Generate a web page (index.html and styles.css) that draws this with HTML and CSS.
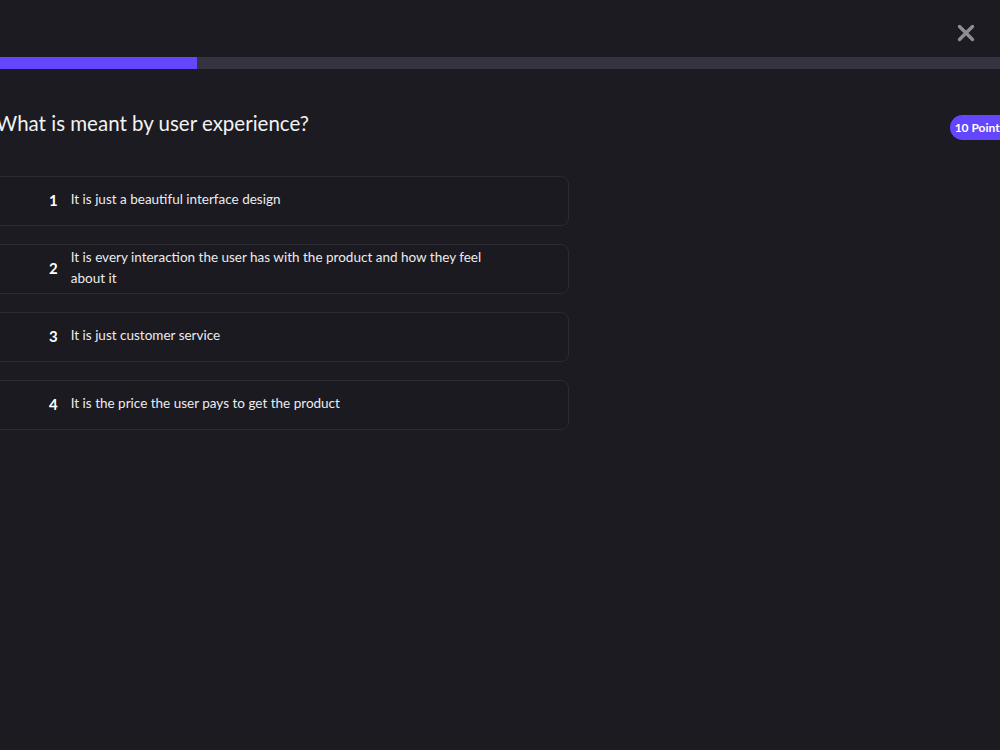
FILE: index.html
```html
<!DOCTYPE html>
<html lang="en">
<head>
    <meta charset="UTF-8">
    <meta name="viewport" content="width=device-width, initial-scale=1.0">
    <title>Quiz</title>
    <link rel="stylesheet" href="styles.css">
</head>
<body>
    <header class="quiz-header">
        <button class="close-btn" aria-label="Close">
            <svg width="18" height="18" viewBox="0 0 18 18">
                <path d="M2.5 2.5 L15.5 15.5 M15.5 2.5 L2.5 15.5" stroke="#8e8d93" stroke-width="3.4" stroke-linecap="round" fill="none"/>
            </svg>
        </button>
    </header>
    <div class="progress">
        <div class="progress-fill" style="width: 197px;"></div>
    </div>

    <main class="quiz">
        <div class="question-row">
            <h2 class="question">What is meant by user experience?</h2>
            <span class="points">10 Points</span>
        </div>

        <ul class="options">
            <li class="option">
                <span class="option-num">1</span>
                <span class="option-text">It is just a beautiful interface design</span>
            </li>
            <li class="option">
                <span class="option-num">2</span>
                <span class="option-text">It is every interaction the user has with the product and how they feel about it</span>
            </li>
            <li class="option">
                <span class="option-num">3</span>
                <span class="option-text">It is just customer service</span>
            </li>
            <li class="option">
                <span class="option-num">4</span>
                <span class="option-text">It is the price the user pays to get the product</span>
            </li>
        </ul>
    </main>
</body>
</html>
```

FILE: styles.css
```css
body {
    margin: 0;
    padding: 0;
    background-color: #1c1b21;
    color: #f2f2f4;
    font-family: Lato, "Noto Sans", sans-serif;
    overflow: hidden;
}

.quiz-header {
    display: flex;
    justify-content: flex-end;
    padding: 24px 25px 15px;
}

.close-btn {
    width: 18px;
    height: 18px;
    padding: 0;
    border: none;
    background: none;
    cursor: pointer;
}
.close-btn svg { display: block; }

.progress {
    height: 12px;
    background-color: #34333f;
}
.progress-fill {
    height: 100%;
    background-color: #6446fe;
}

.quiz {
    margin: 0 -12px 0 -4px;
}

.question-row {
    display: flex;
    justify-content: space-between;
    align-items: center;
    margin-top: 40px;
}

.question {
    margin: 0;
    font-size: 20.5px;
    font-weight: 400;
    line-height: 28px;
}

.points {
    background-color: #6446fe;
    color: white;
    font-size: 12px;
    font-weight: 700;
    line-height: 25px;
    padding: 0 8px 0 5px;
    border-radius: 13px;
    margin: 4px -1px -4px 0;
}

.options {
    list-style: none;
    margin: 39px 0 0 -16px;
    padding: 0;
    width: 589px;
    display: flex;
    flex-direction: column;
    gap: 18px;
}

.option {
    box-sizing: border-box;
    height: 50px;
    display: flex;
    align-items: center;
    gap: 13px;
    padding: 0 0 3px 68px;
    border: 1px solid #2c2b33;
    border-radius: 8px;
    background-color: #1b1a20;
}

.option-num {
    font-size: 15px;
    font-weight: 700;
    color: #ffffff;
}

.option-text {
    max-width: 430px;
    font-size: 13.5px;
    line-height: 21px;
    color: #ececef;
}
```
